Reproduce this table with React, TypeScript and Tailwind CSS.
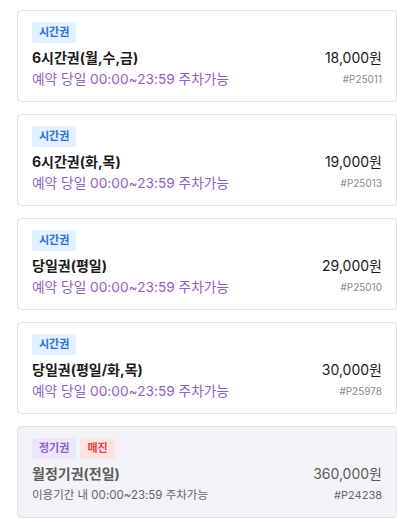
import { clsx } from "clsx";

interface Ticket {
  badges: { label: string; tone: "blue" | "purple" | "red" }[];
  name: string;
  desc: string;
  price: string;
  code: string;
  soldOut?: boolean;
}

const tickets: Ticket[] = [
  {
    badges: [{ label: "시간권", tone: "blue" }],
    name: "6시간권(월,수,금)",
    desc: "예약 당일 00:00~23:59 주차가능",
    price: "18,000원",
    code: "#P25011",
  },
  {
    badges: [{ label: "시간권", tone: "blue" }],
    name: "6시간권(화,목)",
    desc: "예약 당일 00:00~23:59 주차가능",
    price: "19,000원",
    code: "#P25013",
  },
  {
    badges: [{ label: "시간권", tone: "blue" }],
    name: "당일권(평일)",
    desc: "예약 당일 00:00~23:59 주차가능",
    price: "29,000원",
    code: "#P25010",
  },
  {
    badges: [{ label: "시간권", tone: "blue" }],
    name: "당일권(평일/화,목)",
    desc: "예약 당일 00:00~23:59 주차가능",
    price: "30,000원",
    code: "#P25978",
  },
  {
    badges: [
      { label: "정기권", tone: "purple" },
      { label: "매진", tone: "red" },
    ],
    name: "월정기권(전일)",
    desc: "이용기간 내 00:00~23:59 주차가능",
    price: "360,000원",
    code: "#P24238",
    soldOut: true,
  },
];

const badgeTone = {
  blue: "bg-[#e3f0ff] text-[#2a6fd6]",
  purple: "bg-[#ebe6fb] text-[#8a63c9]",
  red: "bg-[#fde3e1] text-[#e8453c]",
};

function TicketCard({ ticket }: { ticket: Ticket }) {
  const sold = ticket.soldOut;
  return (
    <div
      className={clsx(
        "rounded-[4px] border border-[#e2e3e6] px-[14px] pt-[11px] pb-[12px]",
        sold ? "bg-[#f2f3f7]" : "bg-white"
      )}
    >
      <div className="flex gap-[4px]">
        {ticket.badges.map((b) => (
          <span
            key={b.label}
            className={clsx(
              "flex h-[21px] items-center rounded-[3px] px-[7px] text-[11px] font-semibold",
              badgeTone[b.tone]
            )}
          >
            {b.label}
          </span>
        ))}
      </div>
      <div className="mt-[5px] flex items-center justify-between">
        <span
          className={clsx(
            "text-[14px] leading-[20px] font-bold",
            sold ? "text-[#5c5c5c]" : "text-[#1b1b1b]"
          )}
        >
          {ticket.name}
        </span>
        <span
          className={clsx(
            "text-[14px] leading-[20px]",
            sold ? "text-[#5c5c5c]" : "text-[#1b1b1b]"
          )}
        >
          {ticket.price}
        </span>
      </div>
      <div className="mt-[1px] flex items-center justify-between">
        <span
          className={clsx(
            "leading-[20px]",
            sold ? "text-[11.5px] text-[#666]" : "text-[13.7px] text-[#8f5fc4]"
          )}
        >
          {ticket.desc}
        </span>
        <span
          className={clsx(
            "leading-[20px]",
            sold ? "text-[11px] text-[#666]" : "text-[10px] text-[#8a8a8a]"
          )}
        >
          {ticket.code}
        </span>
      </div>
    </div>
  );
}

export default function App() {
  return (
    <div
      className="flex flex-col gap-[12px] bg-white pt-[10px] pr-[10px] pb-[6px] pl-[17px]"
      style={{ fontFamily: '"Inter", "Noto Sans CJK KR", sans-serif' }}
    >
      {tickets.map((t) => (
        <TicketCard key={t.code} ticket={t} />
      ))}
    </div>
  );
}
